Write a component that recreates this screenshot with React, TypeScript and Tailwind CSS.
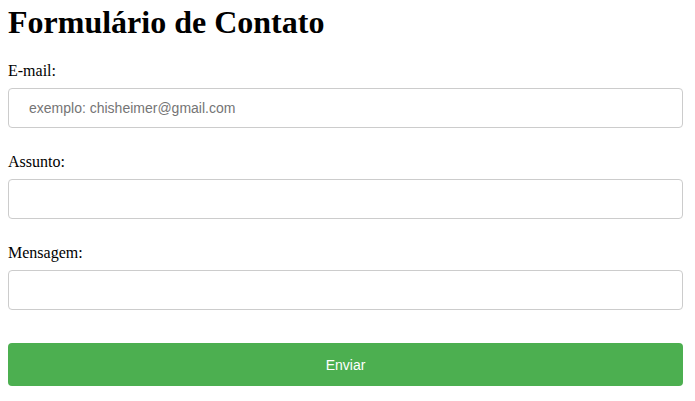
export default function App() {
  return (
    <div className="min-h-screen bg-white pl-2 pr-3 pt-[4px] font-['Liberation_Serif',serif] text-black">
      <h1 className="mb-[21px] text-[32px] font-bold leading-[normal]">Formulário de Contato</h1>

      <form className="flex flex-col" onSubmit={(e) => e.preventDefault()}>
        <label htmlFor="email" className="mb-[8px] block text-base leading-[normal]">
          E-mail:
        </label>
        <input
          id="email"
          type="email"
          placeholder="exemplo: chisheimer@gmail.com"
          className="mb-[25px] h-10 w-full rounded border border-[#cccccc] px-5 font-['Liberation_Sans',Arial,sans-serif] text-sm text-black placeholder:text-[#757575] outline-none"
        />

        <label htmlFor="assunto" className="mb-[8px] block text-base leading-[normal]">
          Assunto:
        </label>
        <input
          id="assunto"
          type="text"
          className="mb-[25px] h-10 w-full rounded border border-[#cccccc] px-5 font-['Liberation_Sans',Arial,sans-serif] text-sm outline-none"
        />

        <label htmlFor="mensagem" className="mb-[8px] block text-base leading-[normal]">
          Mensagem:
        </label>
        <input
          id="mensagem"
          type="text"
          className="mb-[33px] h-10 w-full rounded border border-[#cccccc] px-5 font-['Liberation_Sans',Arial,sans-serif] text-sm outline-none"
        />

        <button
          type="submit"
          className="h-[43px] w-full rounded bg-[#4caf50] font-['Liberation_Sans',Arial,sans-serif] text-sm text-white"
        >
          Enviar
        </button>
      </form>
    </div>
  )
}
